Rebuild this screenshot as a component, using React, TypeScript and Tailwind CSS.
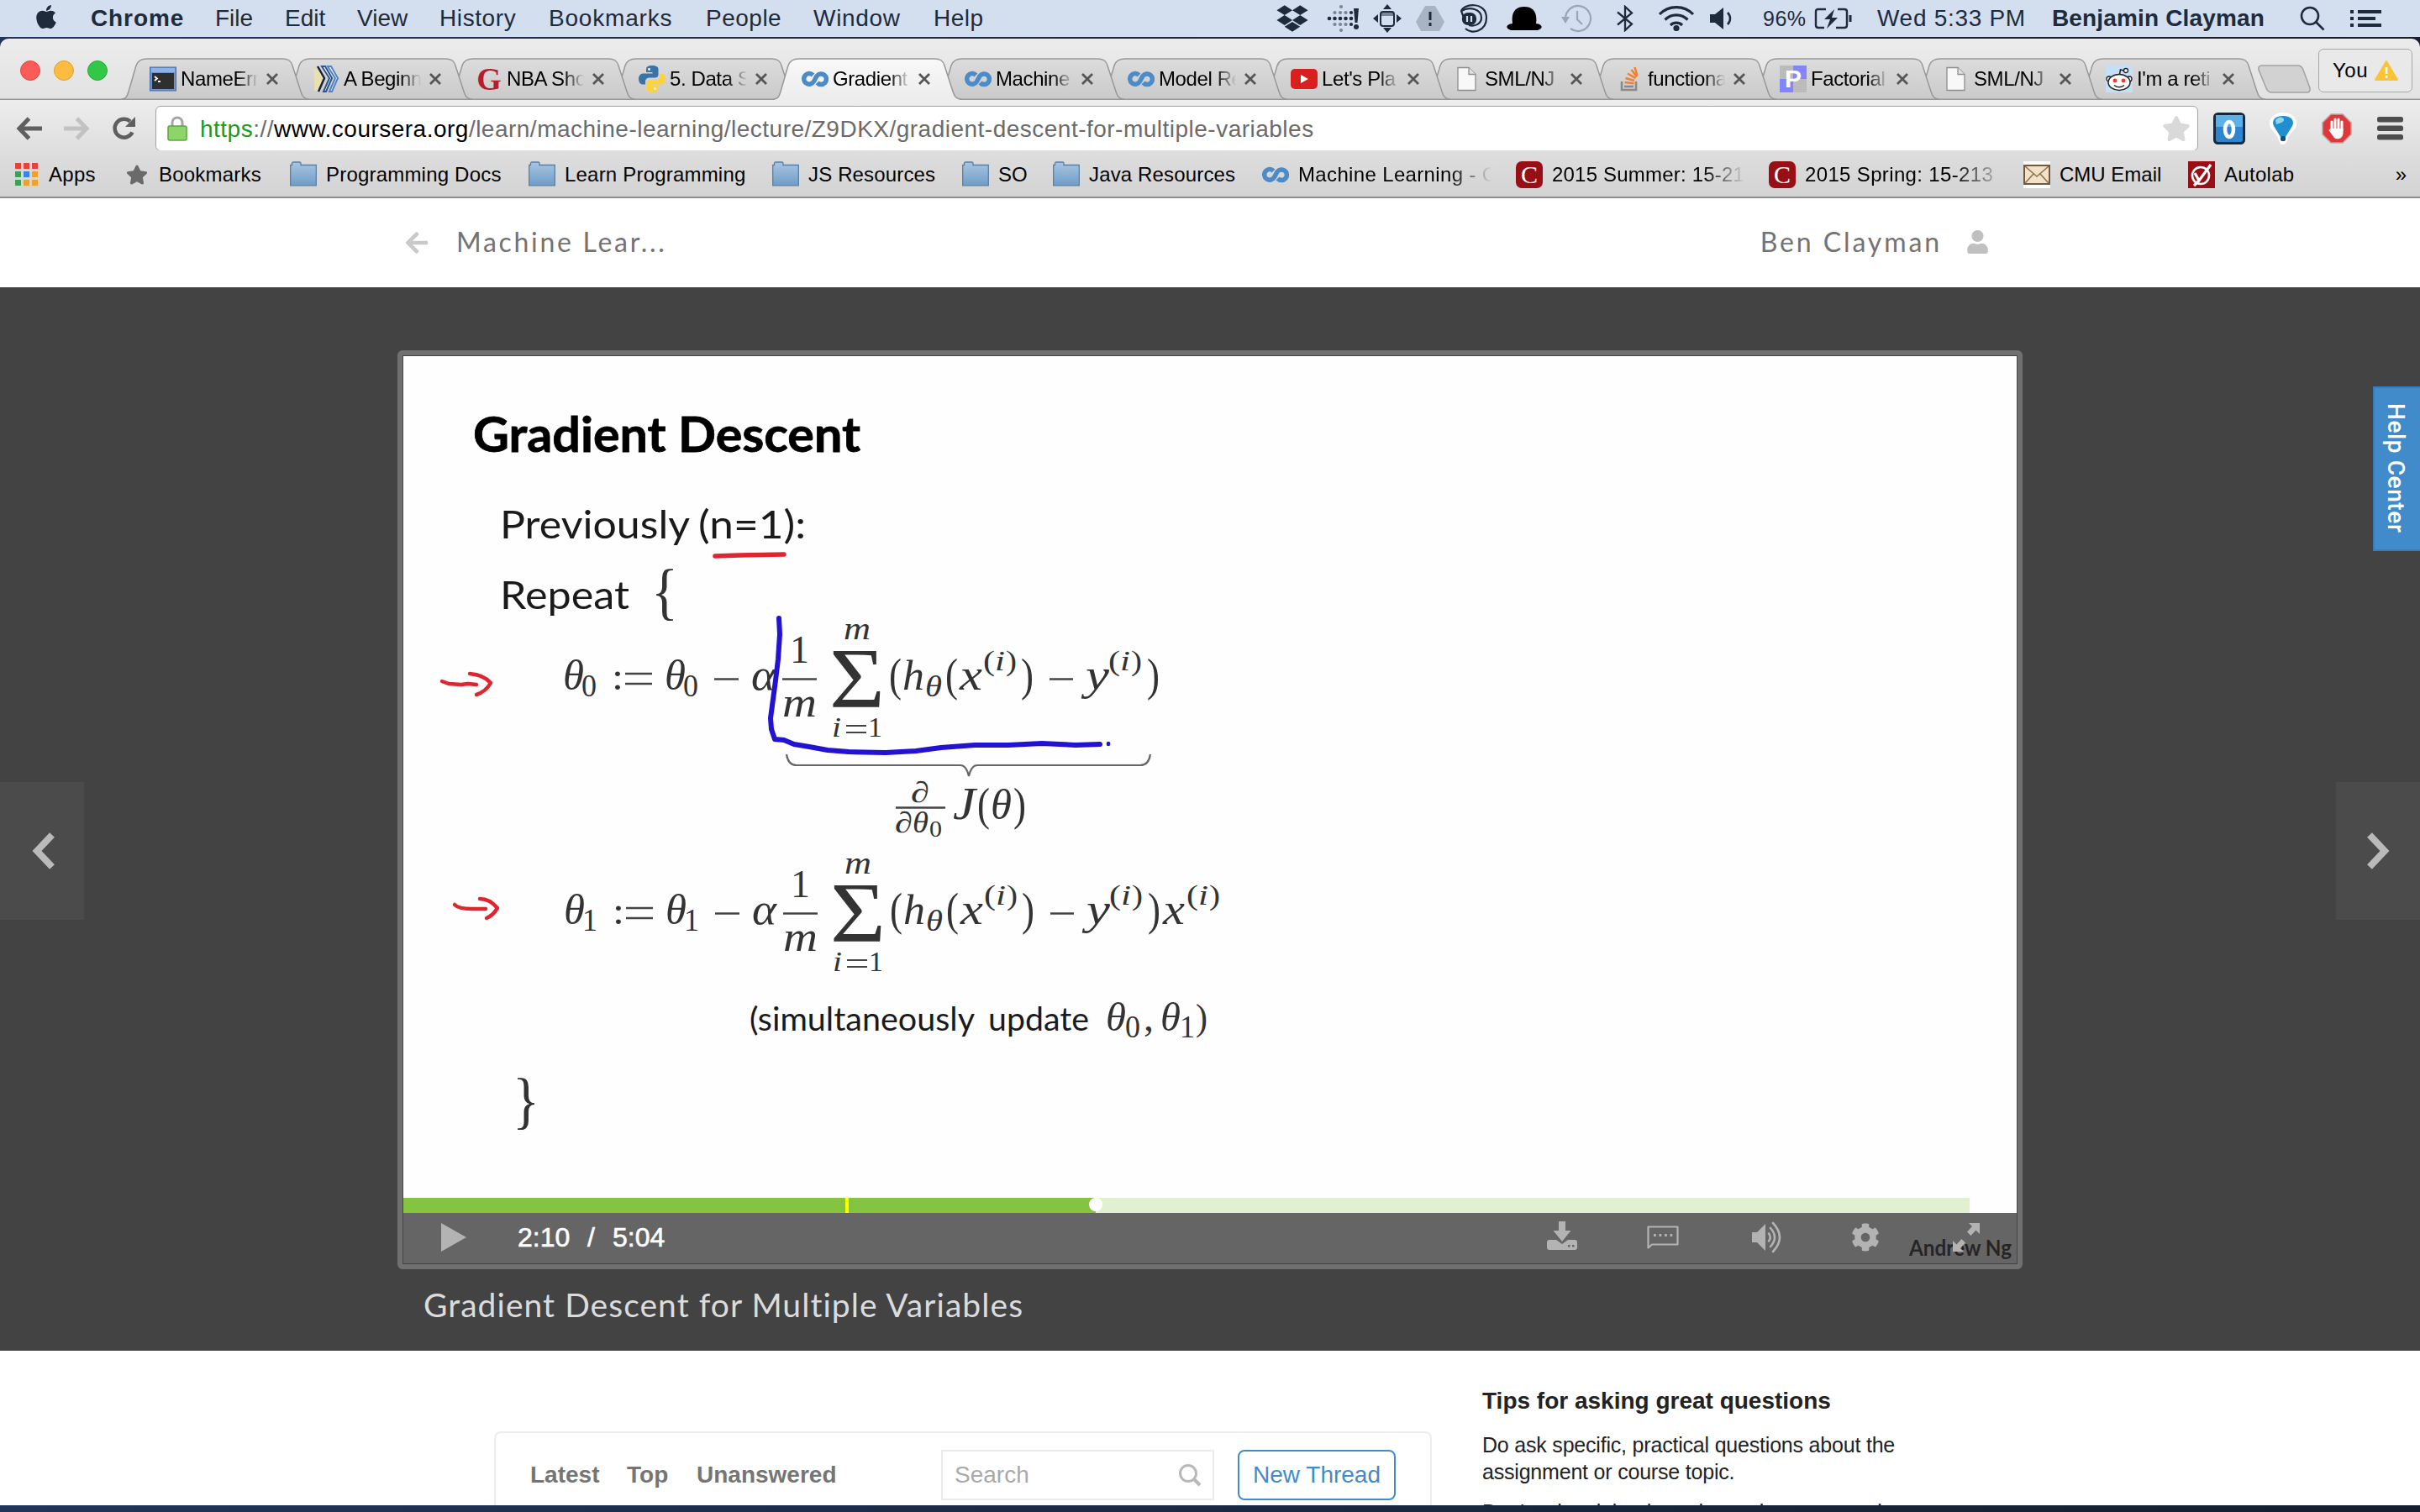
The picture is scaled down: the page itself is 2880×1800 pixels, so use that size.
import React from 'react';
import { FaApple, FaDropbox, FaBluetoothB, FaCog, FaStar, FaUser, FaArrowLeft } from 'react-icons/fa';

const SANS = "font-['Liberation_Sans',Arial,sans-serif]";
const LATO = 'Lato, sans-serif';
const SERIF = '"Liberation Serif", serif';

/* ---------- small icons ---------- */

const CourseraIcon = (): JSX.Element => (
  <svg className="w-8 h-8" viewBox="0 0 32 32" fill="none" stroke="#4a8bc8" strokeWidth="5.500">
    <path d="M13.500 11.500A6.300 6.300 0 1 0 14.500 19L18 12.500A6.300 6.300 0 1 1 18.500 20.500" />
  </svg>
);

const TerminalIcon = (): JSX.Element => (
  <svg className="w-8 h-8" viewBox="0 0 32 32">
    <rect x="0.500" y="2" width="31" height="28" fill="#6f93c9" stroke="#4a6da8" />
    <rect x="2" y="3" width="28" height="5" fill="#8fb2e6" />
    <rect x="3" y="9" width="26" height="19" fill="#2f2f2f" />
    <path d="M6 13l3 2.500-3 2.500M10 19h3" stroke="#fff" strokeWidth="1.800" fill="none" />
  </svg>
);

const PagesIcon = (): JSX.Element => (
  <svg className="w-8 h-8" viewBox="0 0 32 32" fill="none" strokeWidth="2">
    <path d="M1 4l7 0 6 12-7 14H2V18z" fill="#eadfae" />
    <path d="M6 1l8 14-7 16" stroke="#15233f" strokeWidth="2.500" />
    <path d="M11 1h4l8 14-7 16h-3l7-16z" fill="#fff" stroke="#2d5590" />
    <path d="M18 1h4l8 14-7 16h-3l7-16z" fill="#fff" stroke="#4d84c4" />
  </svg>
);

const PythonIcon = (): JSX.Element => (
  <svg className="w-8 h-8" viewBox="0 0 32 32">
    <path d="M16 0c-5 0-7 1.500-7 4.500V8h7.500v1.500H5.500C2 9.500 0 12 0 16s2 6.500 5 6.500h3V19c0-3 2-4.500 5-4.500h6.500c2.500 0 4-1.500 4-4v-6C23.500 1.500 21 0 16 0z" fill="#3a73a6" />
    <circle cx="12.500" cy="4.500" r="1.400" fill="#fff" />
    <path d="M16 32c5 0 7-1.500 7-4.500V24h-7.500v-1.500h11c3.500 0 5.500-2.500 5.500-6.500s-2-6.500-5-6.500h-2V13c0 3-2 4.500-5 4.500h-6.500c-2.500 0-4 1.500-4 4v6c0 3 2.500 4.500 7.500 4.500z" fill="#fdd23b" />
    <circle cx="19.500" cy="27.500" r="1.400" fill="#fff" />
  </svg>
);

const YoutubeIcon = (): JSX.Element => (
  <svg className="w-8 h-8" viewBox="0 0 32 32">
    <rect x="0" y="4" width="32" height="24" rx="5" fill="#d8211f" />
    <path d="M12 11l9 5-9 5z" fill="#fff" />
  </svg>
);

const DocIcon = (): JSX.Element => (
  <svg className="w-8 h-8" viewBox="0 0 32 32">
    <path d="M5 2.500h13l8 8v19H5z" fill="#f8f8f8" stroke="#8e8e8e" strokeWidth="1.300" />
    <path d="M18 2.500v8h8" fill="#e2e2e2" stroke="#8e8e8e" strokeWidth="1.300" />
  </svg>
);

const StackIcon = (): JSX.Element => (
  <svg className="w-8 h-8" viewBox="0 0 32 32" fill="none" strokeWidth="2.600">
    <path d="M6 19v10h17V19" stroke="#8a8a8a" />
    <path d="M9 25h11" stroke="#8a8a8a" />
    <path d="M9.500 20l11 1.200M10.500 15l10.500 3M13 9.500l9.500 5.700M17.500 5l6.500 8.500M21.500 2l3 10" stroke="#ef8236" />
  </svg>
);

const RedditIcon = (): JSX.Element => (
  <svg className="w-8 h-8" viewBox="0 0 32 32">
    <rect width="32" height="32" fill="#c5dff6" />
    <path d="M16 13l1.500-8 6 1.500" stroke="#222" strokeWidth="1.500" fill="none" />
    <circle cx="24" cy="6" r="2.500" fill="#fff" stroke="#222" strokeWidth="1.300" />
    <circle cx="4" cy="16" r="3" fill="#fff" stroke="#222" strokeWidth="1.300" />
    <circle cx="28" cy="16" r="3" fill="#fff" stroke="#222" strokeWidth="1.300" />
    <ellipse cx="16" cy="20" rx="13" ry="9.500" fill="#fff" stroke="#222" strokeWidth="1.500" />
    <circle cx="11" cy="18" r="2.400" fill="#f33" />
    <circle cx="21" cy="18" r="2.400" fill="#f33" />
    <path d="M10 23.500c3 3 9 3 12 0" stroke="#222" strokeWidth="1.500" fill="none" />
  </svg>
);

const GIcon = (): JSX.Element => (
  <span className="w-8 h-8 flex items-center justify-center font-['Liberation_Serif',serif] font-bold text-[38px] leading-none text-[#b3202c]">G</span>
);

const PIcon = (): JSX.Element => (
  <span className="w-8 h-8 grid grid-cols-2 grid-rows-2 relative">
    <span className="bg-[#bbbbbb]" />
    <span className="bg-[#8484fb]" />
    <span className="bg-[#8484fb]" />
    <span className="bg-[#bbbbbb]" />
    <span className="absolute inset-0 flex items-center justify-center font-['Liberation_Sans',sans-serif] font-bold text-[30px] leading-none text-white">P</span>
  </span>
);

const FolderIcon = (): JSX.Element => (
  <svg className="w-8 h-8" viewBox="0 0 32 32">
    <defs>
      <linearGradient id="folder" x1="0" y1="0" x2="0" y2="1">
        <stop offset="0" stopColor="#a9c6e2" />
        <stop offset="1" stopColor="#6f9dc6" />
      </linearGradient>
    </defs>
    <path d="M0.700 4.500H2.500V2.500Q2.500 1 4 1H11.500q1.500 0 1.500 1.500V4.500h18.300v24.300H0.700z" fill="url(#folder)" stroke="#5b7fa3" strokeWidth="1.300" />
  </svg>
);

const CmuIcon = (): JSX.Element => (
  <span className="w-8 h-8 rounded-[7px] bg-[#990f16] flex items-center justify-center font-['Liberation_Serif',serif] text-[30px] leading-none text-white">C</span>
);

const MailIcon = (): JSX.Element => (
  <svg className="w-8 h-8" viewBox="0 0 32 32">
    <rect width="32" height="32" fill="#fff" />
    <rect x="1" y="5" width="30" height="22" fill="#f3e2c4" stroke="#6f5b45" strokeWidth="2" />
    <path d="M2 6l14 12L30 6M2 26l10-11M30 26L20 15" stroke="#8a7358" strokeWidth="1.600" fill="none" />
  </svg>
);

const AutolabIcon = (): JSX.Element => (
  <svg className="w-8 h-8" viewBox="0 0 32 32" fill="none" stroke="#fff">
    <rect width="32" height="32" fill="#990f16" stroke="none" />
    <circle cx="15" cy="17" r="10" strokeWidth="2.600" />
    <path d="M8 14l5 9L27 4M7 29l6-6" strokeWidth="3.200" />
  </svg>
);

const AppsIcon = (): JSX.Element => (
  <span className="w-[27px] h-[27px] grid grid-cols-3 gap-[3px]">
    <span className="bg-[#e5423c]" /><span className="bg-[#e5423c]" /><span className="bg-[#e5423c]" />
    <span className="bg-[#3f9e57]" /><span className="bg-[#3a83ea]" /><span className="bg-[#e9a233]" />
    <span className="bg-[#3f9e57]" /><span className="bg-[#e9a233]" /><span className="bg-[#e9a233]" />
  </span>
);

/* ---------- macOS menu bar ---------- */

const menuItems = [
  { label: 'File', className: 'w-[83px]' },
  { label: 'Edit', className: 'w-[86px]' },
  { label: 'View', className: 'w-[98px]' },
  { label: 'History', className: 'w-[130px] tracking-[0.6px]' },
  { label: 'Bookmarks', className: 'w-[187px] tracking-[0.8px]' },
  { label: 'People', className: 'w-[128px] tracking-[0.5px]' },
  { label: 'Window', className: 'w-[143px] tracking-[0.7px]' },
  { label: 'Help', className: 'w-[100px] tracking-[0.5px]' },
];

const MenuBar = (): JSX.Element => (
  <div className="h-[44px] shrink-0 bg-[#d3deee] flex items-center text-[28px] leading-none text-[#1e2b3c] whitespace-nowrap">
    <FaApple className="w-[30px] h-[32px] ml-[40px] mb-[4px]" />
    <span className="w-[148px] ml-[38px] font-bold tracking-[0.9px]">Chrome</span>
    {menuItems.map((item) => (
      <span key={item.label} className={item.className}>{item.label}</span>
    ))}
    <div className="ml-auto flex items-center">
      <FaDropbox className="w-[38px] h-[36px] mr-[22px]" />
      <svg className="w-[38px] h-[34px] mr-[17px]" viewBox="0 0 38 34" fill="#1e2b3c">
        {[0, 6.5, 13, 19.5, 26].map((x) => <circle key={x} cx={x + 3} cy="17" r="2.300" />)}
        {[10, 24].map((y) => [6.5, 13, 19.5, 26].map((x) => <circle key={`${x}-${y}`} cx={x + 3} cy={y} r="2.100" opacity={x > 20 ? 1 : 0.5} />))}
        <circle cx="17" cy="3" r="2.100" opacity="0.5" />
        <circle cx="17" cy="31" r="2.100" opacity="0.5" />
        <path d="M32 5h6l-1.500 17h-3z" />
        <circle cx="35" cy="27" r="3" />
      </svg>
      <svg className="w-[34px] h-[34px] mr-[17px]" viewBox="0 0 34 34" fill="#1e2b3c">
        <path d="M12 6l5-6 5 6zM12 28l5 6 5-6zM6 12l-6 5 6 5zM28 12l6 5-6 5z" />
        <rect x="9" y="9" width="16" height="17" rx="3" fill="none" stroke="#1e2b3c" strokeWidth="2" />
        <path d="M10 10h14v4H10z" opacity="0.5" />
      </svg>
      <svg className="w-[34px] h-[30px] mr-[18px]" viewBox="0 0 34 30">
        <path d="M11 0h12l11 19-6 11H6L0 19z" fill="#a9b4c3" />
        <path d="M17 7v10M17 20v4" stroke="#1e2b3c" strokeWidth="3" />
      </svg>
      <svg className="w-[34px] h-[34px] mr-[22px]" viewBox="0 0 34 34" fill="none" stroke="#1e2b3c" strokeWidth="2.200">
        <path d="M2 9C3-1 32-4 32 16c0 17-18 20-25 13" />
        <path d="M2 8c10-6 24-2 24 8 0 7-7 11-15 9" />
        <path d="M2 8l3 8" />
        <rect x="4" y="11" width="15" height="13" rx="6" fill="#1e2b3c" />
        <path d="M9 14v7M14 14v7" stroke="#d3deee" strokeWidth="2.200" />
      </svg>
      <svg className="w-[42px] h-[28px] mr-[22px]" viewBox="0 0 42 28" fill="#000">
        <path d="M7 20C5 6 11 0 21 0s16 6 14 20c8 1 9 6 2 8H5c-7-2-6-7 2-8z" />
      </svg>
      <svg className="w-[38px] h-[34px] mr-[29px]" viewBox="0 0 38 34" fill="none" stroke="#9aa6b8" strokeWidth="2.200">
        <path d="M6 17A15 15 0 1 1 12 29" />
        <path d="M20 8v10l6 6" />
        <path d="M1 15h10l-5 8z" fill="#9aa6b8" stroke="none" />
      </svg>
      <svg className="w-[20px] h-[32px] mr-[29px]" viewBox="0 0 20 32" fill="none" stroke="#1e2b3c" strokeWidth="2.300">
        <path d="M1 8.500l17 14L10 30V2l8 7.500L1 23.500" />
      </svg>
      <svg className="w-[44px] h-[30px] mr-[18px]" viewBox="0 0 44 30" fill="none" stroke="#1e2b3c" strokeWidth="3.200">
        <path d="M2 10a28 28 0 0 1 40 0M8.500 16.500a19 19 0 0 1 27 0M15 23a10 10 0 0 1 14 0" />
        <circle cx="22" cy="26.500" r="2" fill="#1e2b3c" />
      </svg>
      <svg className="w-[28px] h-[26px] mr-[35px]" viewBox="0 0 28 26" fill="#1e2b3c">
        <path d="M0 8h6l10-8v26L6 18H0z" />
        <path d="M21 6c4 4 4 10 0 14" fill="none" stroke="#1e2b3c" strokeWidth="2.500" />
      </svg>
      <span className="w-[61px] text-[25px] tracking-[0.5px]">96%</span>
      <svg className="w-[46px] h-[26px] mr-[29px]" viewBox="0 0 46 26" fill="none" stroke="#1e2b3c" strokeWidth="2.400">
        <path d="M14 2H5Q2 2 2 5v16q0 3 3 3h7M28 2h8q3 0 3 3v16q0 3-3 3H26" />
        <path d="M43 9v8" strokeWidth="3" />
        <path d="M24 2L12 14h7l-4 11 13-13h-7z" fill="#1e2b3c" stroke="none" />
      </svg>
      <span className="w-[208px] tracking-[0.7px]">Wed 5:33 PM</span>
      <span className="w-[295px] font-bold tracking-[0.150px]">Benjamin Clayman</span>
      <svg className="w-[30px] h-[30px] mr-[30px]" viewBox="0 0 30 30" fill="none" stroke="#1e2b3c" strokeWidth="2.600">
        <circle cx="12" cy="12" r="10" />
        <path d="M19 19l9.500 9.500" />
      </svg>
      <svg className="w-[37px] h-[22px] mr-[46px]" viewBox="0 0 37 22" fill="#1e2b3c">
        <path d="M0 1h4v4H0zM0 9h4v4H0zM0 17h4v4H0zM9 1h28v4H9zM9 9h21v4H9zM9 17h28v4H9z" />
      </svg>
    </div>
  </div>
);

/* ---------- Chrome tabs ---------- */

interface TabData {
  title: string;
  icon: React.FC;
  z: string;
  active?: boolean;
}

const tabs: TabData[] = [
  { title: 'NameErr', icon: TerminalIcon, z: 'z-[13]' },
  { title: 'A Beginn', icon: PagesIcon, z: 'z-[12]' },
  { title: 'NBA Sho', icon: GIcon, z: 'z-[11]' },
  { title: '5. Data S', icon: PythonIcon, z: 'z-[10]' },
  { title: 'Gradient', icon: CourseraIcon, z: 'z-[20]', active: true },
  { title: 'Machine', icon: CourseraIcon, z: 'z-[9]' },
  { title: 'Model Re', icon: CourseraIcon, z: 'z-[8]' },
  { title: "Let's Pla", icon: YoutubeIcon, z: 'z-[7]' },
  { title: 'SML/NJ', icon: DocIcon, z: 'z-[6]' },
  { title: 'functiona', icon: StackIcon, z: 'z-[5]' },
  { title: 'Factorial', icon: PIcon, z: 'z-[4]' },
  { title: 'SML/NJ', icon: DocIcon, z: 'z-[3]' },
  { title: "I'm a reti", icon: RedditIcon, z: 'z-[2]' },
];

const Tab = ({ title, icon: Icon, z, active }: TabData): JSX.Element => (
  <div className={`relative w-[224px] h-[50px] -mr-[30px] shrink-0 flex items-center pl-[34px] ${z}`}>
    <svg className="absolute inset-0 w-full h-full" viewBox="0 0 224 50">
      <defs>
        <linearGradient id="tabOff" x1="0" y1="0" x2="0" y2="1">
          <stop offset="0" stopColor="#dcdcdc" />
          <stop offset="1" stopColor="#cacaca" />
        </linearGradient>
        <linearGradient id="tabOn" x1="0" y1="0" x2="0" y2="1">
          <stop offset="0" stopColor="#f8f8f8" />
          <stop offset="1" stopColor="#ededed" />
        </linearGradient>
      </defs>
      <path
        d={`M0 49.300C6 49 7 46 9 40L18 9C20 3 24 1 31 1H192C199 1 202 3 204 9L214 40C216 46 218 49 224 49.300${active ? 'V50H0' : 'Z'}`}
        fill={active ? 'url(#tabOn)' : 'url(#tabOff)'}
      />
      <path
        d={`M0 49.300C6 49 7 46 9 40L18 9C20 3 24 1 31 1H192C199 1 202 3 204 9L214 40C216 46 218 49 224 49.300${active ? '' : 'Z'}`}
        fill="none"
        stroke="#989898"
        strokeWidth="1.500"
      />
    </svg>
    <span className="relative w-8 h-8 flex">
      <Icon />
    </span>
    <span className="relative ml-[5px] w-[94px] overflow-hidden whitespace-nowrap text-[24px] leading-[32px] tracking-[-0.4px] text-black [mask-image:linear-gradient(to_right,black_72%,transparent_98%)]">
      {title}
    </span>
    <svg className="relative ml-[7px] w-[16px] h-[16px]" viewBox="0 0 16 16" stroke="#555" strokeWidth="2.800">
      <path d="M2 2l12 12M14 2L2 14" />
    </svg>
  </div>
);

const TabStrip = (): JSX.Element => (
  <div className="h-[73px] shrink-0 rounded-t-[10px] bg-linear-to-b from-[#ececec] to-[#e2e2e2] flex items-end shadow-[inset_0_-1.500px_0_#989898]">
    <div className="w-[144px] h-[50px] shrink-0 flex items-center pb-[20px] pl-[24px] gap-[16px]">
      <span className="w-6 h-6 rounded-full bg-[#fc5b57] border border-[#e2463f]" />
      <span className="w-6 h-6 rounded-full bg-[#fdbc40] border border-[#dfa033]" />
      <span className="w-6 h-6 rounded-full bg-[#33c748] border border-[#27aa35]" />
    </div>
    {tabs.map((tab, i) => (
      <Tab key={i} {...tab} />
    ))}
    <svg className="w-[66px] h-[34px] ml-[20px] mb-[8px] shrink-0" viewBox="0 0 66 34">
      <path d="M6 1H48q5 0 7 5l8 22q1 5-4 5H18q-5 0-7-5L2 6q-1-5 4-5z" fill="#d2d2d2" stroke="#a2a2a2" strokeWidth="1.500" />
    </svg>
    <div className="ml-auto mr-[9px] mb-[9px] w-[112px] h-[52px] shrink-0 rounded-[6px] border-[1.5px] border-[#a8a8a8] bg-[#e9e9e9] flex items-center justify-center gap-[8px] text-[24px]">
      <span className="tracking-[0.5px]">You</span>
      <svg className="w-[28px] h-[24px]" viewBox="0 0 28 24">
        <path d="M14 1L27 23H1z" fill="#fcc335" stroke="#fcc335" strokeWidth="2" strokeLinejoin="round" />
        <path d="M14 8v8M14 18v3" stroke="#fff" strokeWidth="2.600" />
      </svg>
    </div>
  </div>
);

/* ---------- Chrome toolbar ---------- */

const Toolbar = (): JSX.Element => (
  <div className="h-[60px] shrink-0 bg-linear-to-b from-[#ededed] to-[#dfdfdf] flex items-center pt-[8px]">
    <svg className="w-[32px] h-[28px] ml-[19px]" viewBox="0 0 32 28" fill="none" stroke="#5f5f5f" strokeWidth="5">
      <path d="M31 14H5M15.500 2L4 14l11.500 12" />
    </svg>
    <svg className="w-[32px] h-[28px] ml-[24px]" viewBox="0 0 32 28" fill="none" stroke="#c2c2c2" strokeWidth="5">
      <path d="M1 14h26M16.500 2L28 14 16.500 26" />
    </svg>
    <svg className="w-[30px] h-[30px] ml-[26px]" viewBox="0 0 30 30" fill="none" stroke="#5f5f5f" strokeWidth="4.500">
      <path d="M24.500 19.500A11 11 0 1 1 22 6.500" />
      <path d="M28 1v12H16z" fill="#5f5f5f" stroke="none" />
    </svg>
    <div className="ml-[22px] w-[2431px] h-[54px] shrink-0 bg-white border-[1.5px] border-[#a3a3a3] rounded-[6px] flex items-center pl-[13px]">
      <svg className="w-[24px] h-[30px]" viewBox="0 0 24 30">
        <path d="M6 14V8a6 6 0 0 1 12 0v6" fill="none" stroke="#a5a5a5" strokeWidth="3" />
        <rect x="1" y="12" width="22" height="17" rx="2" fill="#8fd468" stroke="#5aa83a" strokeWidth="1.500" />
      </svg>
      <span className="ml-[15px] pt-[1px] text-[28px] leading-none tracking-[0.49px] whitespace-nowrap text-[#6b6b6b]">
        <span className="text-[#1b9a1b]">https</span>://<span className="text-black">www.coursera.org</span>/learn/machine-learning/lecture/Z9DKX/gradient-descent-for-multiple-variables
      </span>
      <FaStar className="ml-auto mr-[8px] w-[34px] h-[34px] text-[#d9d9d9]" />
    </div>
    <svg className="w-[38px] h-[38px] ml-[18px]" viewBox="0 0 38 38">
      <rect x="1.500" y="1.500" width="35" height="35" rx="4" fill="#2b86cf" stroke="#14283c" strokeWidth="3" />
      <rect x="3" y="3" width="32" height="14" fill="#5cb0ea" />
      <ellipse cx="19" cy="20" rx="5" ry="9" fill="none" stroke="#fff" strokeWidth="4.500" />
    </svg>
    <svg className="w-[36px] h-[38px] ml-[27px]" viewBox="0 0 36 38">
      <path d="M18 0C6 0 -1 9 3 18l8 10c2 3 2 10 7 10s5-7 7-10l8-10C37 9 30 0 18 0z" fill="#fff" />
      <path d="M18 4C8 4 4 10 7 16l8 13h6l8-13C32 10 28 4 18 4z" fill="#1f8fd0" />
      <path d="M9 9c4-5 9-4 10-1s-5 5-9 6z" fill="#8fd4f5" />
      <rect x="15" y="28" width="6" height="6" rx="2" fill="#10507f" />
    </svg>
    <svg className="w-[36px] h-[36px] ml-[28px]" viewBox="0 0 36 36">
      <path d="M11 1h14l10 10v14L25 35H11L1 25V11z" fill="#e0383a" stroke="#b9a5a5" strokeWidth="1.500" />
      <path d="M12 20V10M16 18V7M20 18V7M24 20V10" stroke="#fff" strokeWidth="3" strokeLinecap="round" />
      <path d="M10.500 18h15v5c0 9-10 9-12 4l-5-7z" fill="#fff" />
    </svg>
    <svg className="w-[31px] h-[28px] ml-[30px]" viewBox="0 0 31 28" fill="#4d4d4d">
      <rect width="31" height="6.500" rx="2.500" />
      <rect y="10.500" width="31" height="6.500" rx="2.500" />
      <rect y="21" width="31" height="6.500" rx="2.500" />
    </svg>
  </div>
);

const bookmarks = [
  { label: 'Programming Docs', icon: FolderIcon, className: 'w-[241px] tracking-[0.2px]' },
  { label: 'Learn Programming', icon: FolderIcon, className: 'w-[247px] tracking-[0.2px]' },
  { label: 'JS Resources', icon: FolderIcon, className: 'w-[183px] tracking-[0.15px]' },
  { label: 'SO', icon: FolderIcon, className: 'w-[65px]' },
  { label: 'Java Resources', icon: FolderIcon, className: 'w-[206px] tracking-[0.15px]' },
  { label: 'Machine Learning - C', icon: CourseraIcon, className: 'w-[230px] mr-[29px] tracking-[0.35px] [mask-image:linear-gradient(to_right,black_78%,transparent)]' },
  { label: '2015 Summer: 15-213', icon: CmuIcon, className: 'w-[230px] mr-[28px] tracking-[0.2px] [mask-image:linear-gradient(to_right,black_78%,transparent)]' },
  { label: '2015 Spring: 15-213', icon: CmuIcon, className: 'w-[226px] mr-[34px] tracking-[0.35px] [mask-image:linear-gradient(to_right,black_78%,transparent_105%)]' },
  { label: 'CMU Email', icon: MailIcon, className: 'w-[153px]' },
  { label: 'Autolab', icon: AutolabIcon, className: 'w-[90px] tracking-[0.3px]' },
];

const BookmarksBar = (): JSX.Element => (
  <div className="h-[57px] shrink-0 bg-linear-to-b from-[#dedede] to-[#d3d3d3] border-b-2 border-[#8d8d8d] flex items-center pt-[2px] pl-[18px] pr-[16px] text-[24px] leading-[32px] text-black whitespace-nowrap">
    <AppsIcon />
    <span className="ml-[13px] w-[92px] tracking-[0.3px]">Apps</span>
    <FaStar className="w-[26px] h-[26px] text-[#6a6a6a]" />
    <span className="ml-[13px] w-[156px] tracking-[0.2px]">Bookmarks</span>
    {bookmarks.map(({ label, icon: Icon, className }) => (
      <React.Fragment key={label}>
        <span className="w-8 h-8 mr-[11px] shrink-0 flex"><Icon /></span>
        <span className={`overflow-hidden shrink-0 ${className}`}>{label}</span>
      </React.Fragment>
    ))}
    <span className="ml-auto">»</span>
  </div>
);

/* ---------- lecture slide ---------- */

interface GlyphProps {
  x: number;
  y: number;
  size: number;
  width?: number;
  italic?: boolean;
  children: string;
}

const M = ({ x, y, size, width, italic, children }: GlyphProps): JSX.Element => (
  <text
    x={x}
    y={y}
    fontSize={size}
    fontFamily={SERIF}
    fontStyle={italic ? 'italic' : 'normal'}
    textLength={width}
    lengthAdjust="spacingAndGlyphs"
    fill="#333"
  >
    {children}
  </text>
);

const UpdateRule = ({ index }: { index: string }): JSX.Element => (
  <g>
    <M x={670} y={821} size={50} width={25} italic>θ</M>
    <M x={692} y={829} size={38} width={18}>{index}</M>
    <M x={728} y={821} size={46} width={14}>:</M>
    <path d="M744 802H776M744 814H776" stroke="#444" strokeWidth="2.500" />
    <M x={791} y={821} size={50} width={25} italic>θ</M>
    <M x={813} y={829} size={38} width={18}>{index}</M>
    <path d="M850 808.500H879" stroke="#444" strokeWidth="2.500" />
    <M x={894} y={821} size={52} width={29} italic>α</M>
    <M x={940} y={789} size={46} width={23}>1</M>
    <path d="M931 808.500H972" stroke="#444" strokeWidth="2.500" />
    <M x={931} y={853} size={50} width={41} italic>m</M>
    <M x={1004} y={761} size={37} width={32} italic>m</M>
    <M x={987} y={842} size={101} width={66}>Σ</M>
    <M x={990} y={877} size={34} width={11} italic>i</M>
    <path d="M1007 864H1031M1007 872H1031" stroke="#444" strokeWidth="2.200" />
    <M x={1033} y={877} size={34} width={17}>1</M>
    <M x={1058} y={822} size={54} width={15}>(</M>
    <M x={1074} y={821} size={50} width={26} italic>h</M>
    <M x={1101} y={829} size={36} width={20} italic>θ</M>
    <M x={1125} y={822} size={54} width={15}>(</M>
    <M x={1142} y={821} size={52} width={27} italic>x</M>
    <M x={1170} y={798} size={34} width={14}>(</M>
    <M x={1184} y={798} size={34} width={12} italic>i</M>
    <M x={1197} y={798} size={34} width={13}>)</M>
    <M x={1215} y={822} size={54} width={15}>)</M>
    <path d="M1249 808.500H1277" stroke="#444" strokeWidth="2.500" />
    <M x={1292} y={821} size={52} width={28} italic>y</M>
    <M x={1319} y={798} size={34} width={14}>(</M>
    <M x={1333} y={798} size={34} width={12} italic>i</M>
    <M x={1346} y={798} size={34} width={13}>)</M>
    <M x={1365} y={822} size={54} width={15}>)</M>
  </g>
);

const Slide = (): JSX.Element => (
  <svg className="block w-[1920px] h-[1080px] bg-[#fefefe]" viewBox="480 424 1920 1080">
    <g fontFamily={LATO} fill="#1a1a1a">
      <text x="563" y="538" fontSize="58" fontWeight="bold" textLength="461" lengthAdjust="spacingAndGlyphs" fill="#000" stroke="#000" strokeWidth="0.800">Gradient Descent</text>
      <text x="595" y="641" fontSize="47" textLength="226" lengthAdjust="spacingAndGlyphs">Previously</text>
      <text x="831" y="641" fontSize="47" textLength="128" lengthAdjust="spacingAndGlyphs">(n=1):</text>
      <text x="595" y="725" fontSize="47" textLength="154" lengthAdjust="spacingAndGlyphs">Repeat</text>
      <text x="892" y="1227" fontSize="38" textLength="268" lengthAdjust="spacingAndGlyphs">(simultaneously</text>
      <text x="1176" y="1227" fontSize="38" textLength="120" lengthAdjust="spacingAndGlyphs">update</text>
      <text x="2272" y="1495" fontSize="27" textLength="122" lengthAdjust="spacingAndGlyphs" fontWeight="bold">Andrew Ng</text>
    </g>
    <M x={775} y={729} size={73} width={32}>{'{'}</M>
    <M x={610} y={1335} size={73} width={32}>{'}'}</M>

    <UpdateRule index="0" />
    <g transform="translate(1 279)">
      <UpdateRule index="1" />
      <M x={1383} y={821} size={52} width={26} italic>x</M>
      <M x={1411} y={798} size={34} width={14}>(</M>
      <M x={1425} y={798} size={34} width={12} italic>i</M>
      <M x={1438} y={798} size={34} width={13}>)</M>
    </g>

    {/* partial derivative under the brace */}
    <path d="M936 898q2 13 12 13H1143q7 0 10 13q3-13 10-13H1357q10 0 12-13" fill="none" stroke="#666" strokeWidth="2.200" />
    <M x={1084} y={955} size={35} width={22} italic>∂</M>
    <path d="M1066 961.500H1125" stroke="#444" strokeWidth="2.500" />
    <M x={1065} y={991} size={35} width={21} italic>∂</M>
    <M x={1086} y={991} size={36} width={19} italic>θ</M>
    <M x={1106} y={996} size={27} width={15}>0</M>
    <M x={1134} y={975} size={54} width={27} italic>J</M>
    <M x={1163} y={976} size={54} width={15}>(</M>
    <M x={1179} y={975} size={50} width={25} italic>θ</M>
    <M x={1206} y={976} size={54} width={15}>)</M>

    <M x={1316} y={1227} size={48} width={24} italic>θ</M>
    <M x={1339} y={1235} size={37} width={18}>0</M>
    <M x={1361} y={1227} size={46} width={12}>,</M>
    <M x={1381} y={1227} size={48} width={24} italic>θ</M>
    <M x={1404} y={1235} size={37} width={18}>1</M>
    <M x={1423} y={1226} size={44} width={14}>)</M>

    {/* pen marks */}
    <g fill="none" strokeLinecap="round" strokeLinejoin="round" stroke="#dd2630">
      <path d="M851 662L880 661 933 660" strokeWidth="5.500" />
      <path d="M526 811l8 3 15 1 8-1 10 1M559 802c12 1 20 5 25 11-4 7-11 12-17 14" strokeWidth="4.500" />
      <path d="M541 1077c4 4 10 5 20 5h17M571 1070c9 0 16 5 21 11-3 5-8 10-13 12" strokeWidth="4.500" />
      <path
        d="M927 736L928 755 926 785 923 810 919 840 917 855 918 868 922 880 933 881 945 886 963 889 985 893 1010 895 1054 896 1090 894 1120 890 1160 887 1200 887 1240 885 1280 887 1309 886"
        stroke="#2212d2"
        strokeWidth="6"
      />
      <path d="M1319 885v1" stroke="#2212d2" strokeWidth="4.500" />
    </g>
  </svg>
);

const PlayerControls = (): JSX.Element => (
  <div className="absolute inset-x-0 bottom-0">
    <div className="relative w-[1864px] h-[18px] bg-[#e0f0d1] flex">
      <div className="w-[824px] h-full bg-[#85c441]" />
      <span className="absolute left-[526px] top-0 w-[4px] h-full bg-[#ffff00]" />
      <span className="absolute left-[816px] top-0 w-[16px] h-[16px] rounded-full bg-white" />
    </div>
    <div className="h-[60px] bg-[#2a2a2a]/72 flex items-center pb-[2px] text-[#b3b3b3]">
      <svg className="w-[30px] h-[34px] ml-[45px]" viewBox="0 0 30 34" fill="currentColor">
        <path d="M0 0l30 17L0 34z" />
      </svg>
      <span className="ml-[61px] w-[83px] text-[32px] leading-none text-white [-webkit-text-stroke:0.6px_white]">2:10</span>
      <span className="w-[30px] text-[32px] leading-none text-white [-webkit-text-stroke:0.6px_white]">/</span>
      <span className="text-[32px] leading-none text-white [-webkit-text-stroke:0.6px_white]">5:04</span>
      <div className="ml-auto mr-[44px] flex items-center">
        <svg className="w-[36px] h-[34px] mr-[83px] mb-[4px]" viewBox="0 0 36 34" fill="currentColor">
          <path d="M14 0h8v11h6.500L18 24 7.500 11H14z" />
          <path fillRule="evenodd" d="M3 22h8l7 5 7-5h8q3 0 3 3v6q0 3-3 3H3q-3 0-3-3v-6q0-3 3-3zM25 28v2.500h2.500V28zM30 28v2.500h2.500V28z" />
        </svg>
        <svg className="w-[38px] h-[28px] mr-[87px]" viewBox="0 0 38 28" fill="none" stroke="currentColor" strokeWidth="2.200">
          <path d="M1.500 1.500H36.500V22.500H6L1.500 26.500z" strokeLinejoin="round" />
          <path d="M8 11.500h2.800M14.500 11.500h2.800M21 11.500h2.800M27.500 11.500h2.800" strokeWidth="3" />
        </svg>
        <svg className="w-[36px] h-[38px] mr-[82px]" viewBox="0 -3 36 38" fill="currentColor">
          <path d="M0 10h6L16 0v32L6 22H0z" />
          <path d="M20 11.500q3.500 4.500 0 9M22 5q10 11 0 22M25 -1q16 17 0 34" fill="none" stroke="currentColor" strokeWidth="2.600" strokeLinecap="round" />
        </svg>
        <FaCog className="w-[34px] h-[34px] mr-[87px]" />
        <svg className="w-[32px] h-[34px]" viewBox="0 0 32 34" fill="currentColor">
          <path d="M19 0h13v13l-4.500-4.500-6 6.500-4.500-4.500 6-6.500z" />
          <path d="M13 34H0V21l4.500 4.500 6-6.500L15 23.500 9 30z" />
        </svg>
      </div>
    </div>
  </div>
);

/* ---------- lecture page ---------- */

const PageHeader = (): JSX.Element => (
  <div className="h-[106px] shrink-0 bg-white flex items-center px-[482px] font-[Lato,sans-serif] text-[32px] leading-none text-[#737373]">
    <FaArrowLeft className="w-[28px] h-[30px] text-[#c9c9c9]" />
    <span className="ml-[33px] mb-[2px] tracking-[2.700px]">Machine Lear...</span>
    <span className="ml-auto mb-[3px] tracking-[2.900px]">Ben Clayman</span>
    <FaUser className="ml-[29px] mr-[31px] w-[27px] h-[28px] mb-[3px] text-[#c0c0c0]" />
  </div>
);

const Chevron = ({ d }: { d: string }): JSX.Element => (
  <svg className="w-[30px] h-[46px]" viewBox="0 0 30 46" fill="none" stroke="#bababa" strokeWidth="8">
    <path d={d} />
  </svg>
);

const Lecture = (): JSX.Element => (
  <div className="relative h-[1266px] shrink-0 bg-[#434343] pt-[75px] pl-[473px]">
    <div className="w-[1934px] h-[1094px] rounded-[6px] border-[6px] border-[#707070] bg-[#434343] p-px">
      <div className="relative w-[1920px] h-[1080px]">
        <Slide />
        <PlayerControls />
      </div>
    </div>
    <h1 className="mt-[18px] ml-[31px] font-[Lato,sans-serif] text-[39px] leading-[48px] tracking-[1.050px] text-[#dcdcdc]">
      Gradient Descent for Multiple Variables
    </h1>
    <button className="absolute left-0 top-[589px] w-[100px] h-[164px] bg-[#4b4b4b] flex items-center justify-center pl-1">
      <Chevron d="M25 4L7 23l18 19" />
    </button>
    <button className="absolute right-0 top-[589px] w-[100px] h-[164px] bg-[#4b4b4b] flex items-center justify-center">
      <Chevron d="M5 4l18 19L5 42" />
    </button>
    <div className="absolute right-0 top-[118px] w-[56px] h-[196px] bg-[#428bca] border-2 border-r-0 border-[#357ebd] flex items-center justify-center">
      <span className="[writing-mode:vertical-rl] font-[Roboto,sans-serif] font-medium text-[28px] leading-none tracking-[0.6px] text-white whitespace-nowrap mb-[2px] mr-[4px]">
        Help Center
      </span>
    </div>
  </div>
);

const Discussion = (): JSX.Element => (
  <div className="h-[184px] shrink-0 bg-white overflow-hidden flex items-start pl-[588px]">
    <div className="mt-[96px] w-[1116px] h-[120px] shrink-0 border-2 border-[#ededed] rounded-[8px] flex items-start pt-[20px] pl-[41px] text-[28px] leading-[60px]">
      <span className="w-[115px] font-bold text-[#757575]">Latest</span>
      <span className="w-[83px] font-bold text-[#757575]">Top</span>
      <span className="w-[291px] font-bold text-[#757575]">Unanswered</span>
      <div className="w-[325px] h-[60px] border-2 border-[#ebebeb] flex items-center justify-between pl-[14px] pr-[13px] text-[#a9a9a9]">
        Search
        <svg className="w-[28px] h-[28px]" viewBox="0 0 28 28" fill="none" stroke="#b8b8b8" strokeWidth="3">
          <circle cx="12" cy="12" r="9.500" />
          <path d="M19 19l7 7" strokeWidth="4" />
        </svg>
      </div>
      <button className="ml-[28px] w-[188px] h-[60px] rounded-[8px] border-2 border-[#428bca] text-[#428bca] leading-[56px]">New Thread</button>
    </div>
    <div className="ml-[60px] mt-[40px] text-[#222]">
      <h2 className="text-[28px] leading-[40px] font-bold">Tips for asking great questions</h2>
      <p className="mt-[16px] w-[520px] text-[25px] leading-[32px] tracking-[-0.2px]">
        Do ask specific, practical questions about the assignment or course topic.
      </p>
      <p className="mt-[16px] w-[520px] text-[25px] leading-[32px] tracking-[-0.2px] whitespace-nowrap">Don't ask opinion-based questions or questions</p>
    </div>
  </div>
);

export default function App(): JSX.Element {
  return (
    <div className={`w-[2880px] h-[1800px] overflow-hidden bg-linear-to-r from-[#20355a] to-[#141e2e] flex flex-col ${SANS}`}>
      <MenuBar />
      <div className="mt-[2px] flex flex-col shrink-0">
        <TabStrip />
        <Toolbar />
        <BookmarksBar />
      </div>
      <PageHeader />
      <Lecture />
      <Discussion />
    </div>
  );
}
